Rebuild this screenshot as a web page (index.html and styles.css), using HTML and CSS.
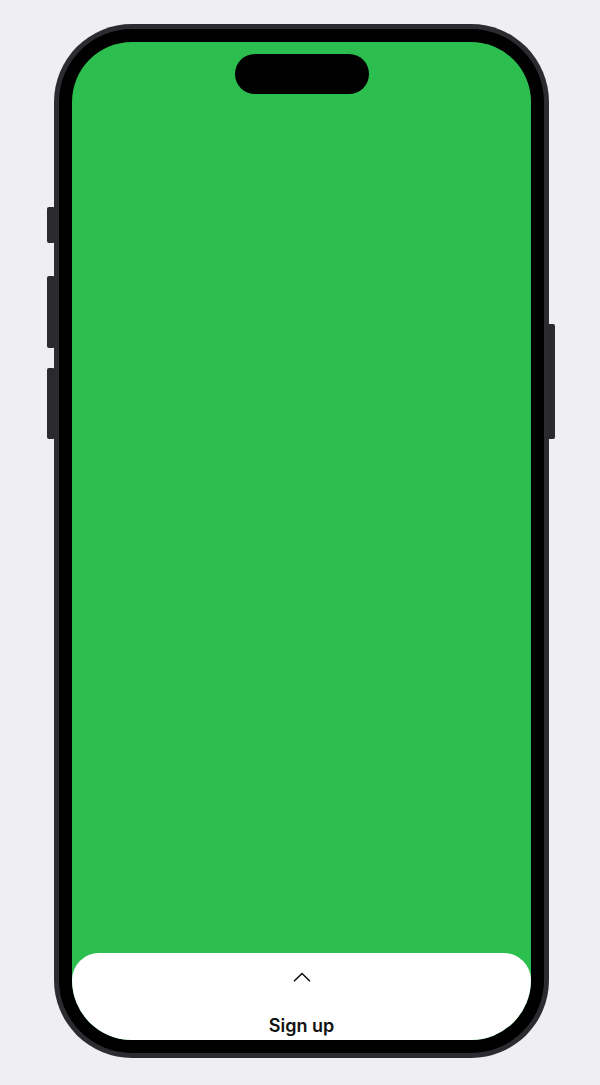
FILE: index.html
```html
<!DOCTYPE html>
<html>
<head>
<meta charset="utf-8">
<link rel="stylesheet" href="styles.css">
</head>
<body>
<div class="page">
  <div class="phone">
    <span class="btn btn-action"></span>
    <span class="btn btn-vol-up"></span>
    <span class="btn btn-vol-down"></span>
    <span class="btn btn-power"></span>
    <div class="bezel">
      <div class="screen">
        <div class="island"></div>
        <div class="sheet">
          <svg class="chevron" width="18" height="10" viewBox="0 0 18 10">
            <path d="M1.5 8.8 L9 1.5 L16.5 8.8" fill="none" stroke="#111" stroke-width="1.6" stroke-linecap="round" stroke-linejoin="round"/>
          </svg>
          <div class="sheet-title">Sign up</div>
        </div>
      </div>
    </div>
  </div>
</div>
</body>
</html>
```
FILE: styles.css
```css
html, body {
  margin: 0;
  padding: 0;
  background: #efeef1;
}
.page {
  width: 600px;
  height: 1085px;
  padding-top: 24px;
  padding-left: 54px;
  box-sizing: border-box;
  overflow: hidden;
}
.phone {
  position: relative;
  width: 495px;
  height: 1034px;
  box-sizing: border-box;
  padding: 5px;
  border-radius: 78px;
  background: #2c2b30;
}
.btn {
  position: absolute;
  background: #2a292e;
  border-radius: 2px;
}
.btn-action { left: -7px; top: 183px; width: 8px; height: 36px; }
.btn-vol-up { left: -7px; top: 252px; width: 8px; height: 72px; }
.btn-vol-down { left: -7px; top: 344px; width: 8px; height: 71px; }
.btn-power { right: -6px; top: 300px; width: 8px; height: 115px; }
.bezel {
  width: 100%;
  height: 100%;
  box-sizing: border-box;
  padding: 13px 13px 13px 13px;
  border-radius: 73px;
  background: #000;
}
.screen {
  width: 100%;
  height: 100%;
  border-radius: 60px;
  background: #2dbe50;
  overflow: hidden;
  display: flex;
  flex-direction: column;
  align-items: center;
}
.island {
  margin-top: 12px;
  width: 134px;
  height: 40px;
  border-radius: 20px;
  background: #000;
}
.sheet {
  margin-top: auto;
  width: 100%;
  height: 87px;
  background: #fff;
  border-radius: 27px 27px 0 0;
  display: flex;
  flex-direction: column;
  align-items: center;
}
.chevron {
  margin-top: 19px;
  display: block;
}
.sheet-title {
  margin-top: 33px;
  font-family: Inter, "Liberation Sans", sans-serif;
  font-weight: 600;
  font-size: 18px;
  line-height: 22px;
  color: #111;
}
```
